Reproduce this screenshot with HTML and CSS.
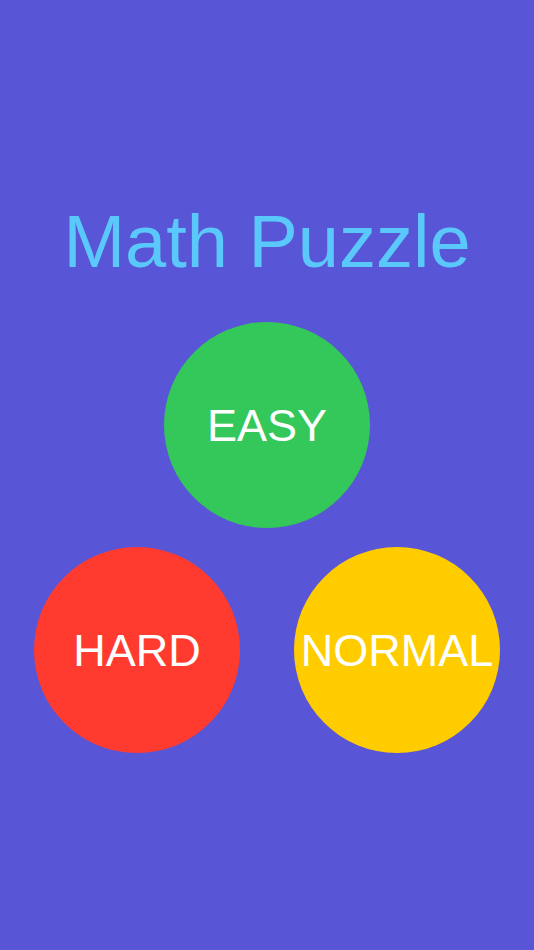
FILE: index.html
```html
<!DOCTYPE html>
<html lang="en">
<head>
    <meta charset="UTF-8">
    <meta name="viewport" content="width=device-width, initial-scale=1.0">
    <title>Math Puzzle</title>
    <link rel="stylesheet" href="styles.css">
</head>
<body>
    <div class="menu">
        <h1 class="title">Math Puzzle</h1>
        <button class="level easy">EASY</button>
        <div class="level-row">
            <button class="level hard">HARD</button>
            <button class="level normal">NORMAL</button>
        </div>
    </div>
</body>
</html>
```

FILE: styles.css
```css
body {
    font-family: "Liberation Sans", Arial, sans-serif;
    background-color: #5856d6;
    margin: 0;
    height: 100vh;
}
.menu {
    display: flex;
    flex-direction: column;
    align-items: center;
    padding-top: 205px;
}
.title {
    margin: 0;
    font-size: 74px;
    line-height: 74px;
    font-weight: normal;
    color: #5ac8fa;
}
.level {
    width: 206px;
    height: 206px;
    border-radius: 50%;
    border: none;
    padding: 0;
    display: flex;
    justify-content: center;
    align-items: center;
    font-family: "Liberation Sans", Arial, sans-serif;
    font-size: 45px;
    line-height: 45px;
    color: white;
    cursor: pointer;
}
.easy {
    margin-top: 43px;
    background-color: #34c759;
}
.level-row {
    display: flex;
    gap: 54px;
    margin-top: 19px;
}
.hard {
    background-color: #ff3b30;
}
.normal {
    background-color: #ffcc00;
}
```
